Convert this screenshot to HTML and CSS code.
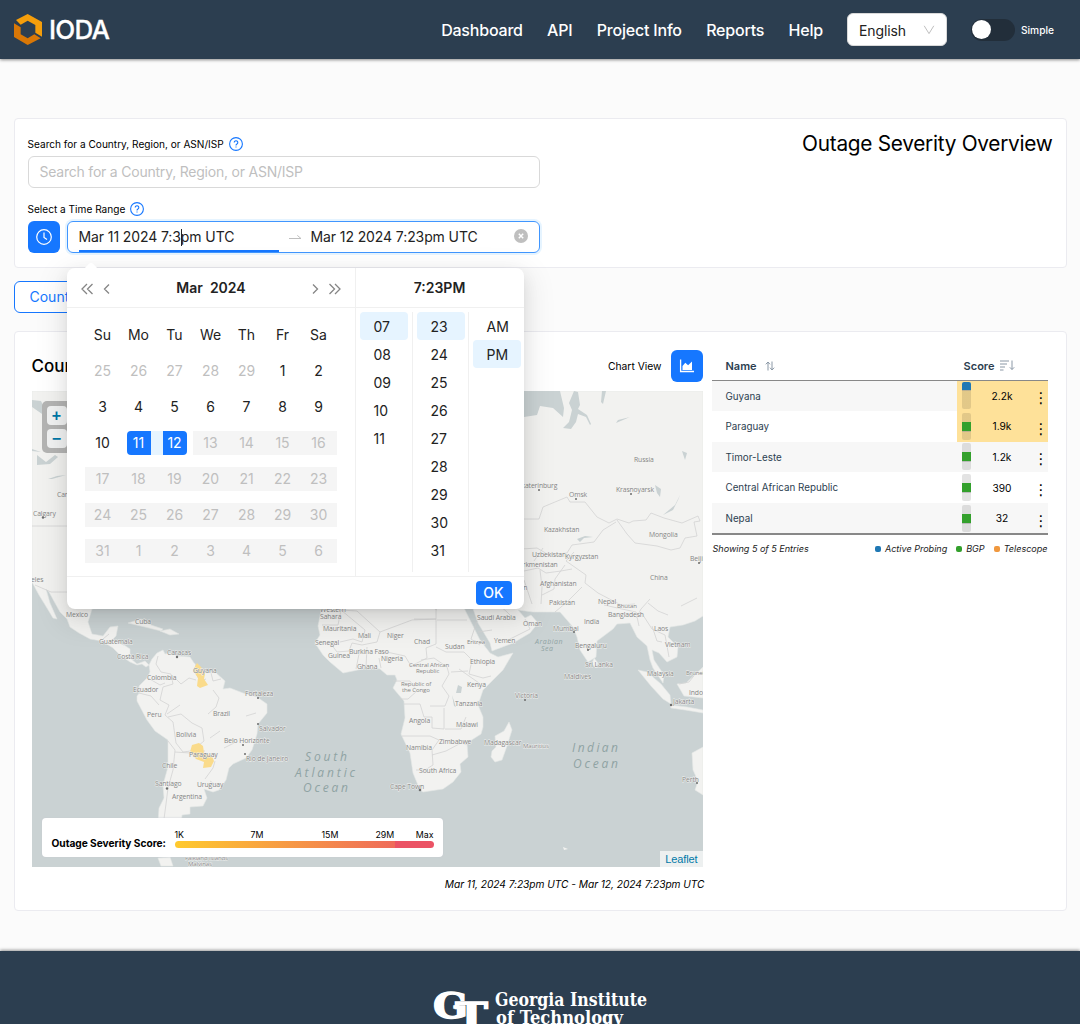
FILE: index.html
```html
<!DOCTYPE html>
<html lang="en">
<head>
<meta charset="utf-8">
<title>IODA Dashboard</title>
<link rel="stylesheet" href="styles.css">
</head>
<body>
<header class="header">
  <a class="brand">
    <svg class="brand-mark" viewBox="42 42 84 93"><path fill="#f59e0b" d="M48 60 83 42l43 24v44l-20-12V75L83 62 62 74z"/><path fill="#d97706" d="m42 70 20 12v21l21 12 20-12 19 12-39 20-41-24z"/></svg>
    <span class="brand-name">IODA</span>
  </a>
  <nav class="nav"><a>Dashboard</a><a>API</a><a>Project Info</a><a>Reports</a><a>Help</a></nav>
  <div class="language"><span>English</span><svg width="12" height="12" viewBox="0 0 12 12"><path d="M1.2 1.8 6 9.6l4.8-7.8" fill="none" stroke="#bfbfbf"/></svg></div>
  <div class="switch"><i></i></div><span class="switch-label">Simple</span>
</header>

<main class="main">
  <section class="card search-card">
    <div class="controls">
      <div class="label">Search for a Country, Region, or ASN/ISP <svg class="help" viewBox="0 0 14 14"><circle cx="7" cy="7" r="6.4"/><path d="M5.2 5.5a1.8 1.8 0 1 1 2.7 1.6c-.7.4-.9.7-.9 1.3M7 9.6v1"/></svg></div>
      <div class="search-input">Search for a Country, Region, or ASN/ISP</div>
      <div class="label label-time">Select a Time Range <svg class="help" viewBox="0 0 14 14"><circle cx="7" cy="7" r="6.4"/><path d="M5.2 5.5a1.8 1.8 0 1 1 2.7 1.6c-.7.4-.9.7-.9 1.3M7 9.6v1"/></svg></div>
      <div class="time-row">
        <div class="square-button"><svg width="16" height="16" viewBox="0 0 16 16" fill="none" stroke="#fff" stroke-width="1.2"><circle cx="8" cy="8" r="7.3"/><path d="M8 3.6V8.4l3 2.2"/></svg></div>
        <div class="range">
          <div class="range-start">Mar 11 2024 7:3<i class="caret"></i>pm UTC</div>
          <svg class="range-arrow" width="14" height="8" viewBox="0 0 14 8"><path d="M1 5.5h12L9.3 2.4" fill="none" stroke="#bfbfbf"/></svg>
          <div class="range-end">Mar 12 2024 7:23pm UTC</div>
          <svg class="clear" width="14" height="14" viewBox="0 0 14 14"><circle cx="7" cy="7" r="7" fill="#bfbfbf"/><path d="m4.8 4.8 4.4 4.4m0-4.4L4.8 9.2" stroke="#fff" stroke-width="1.5"/></svg>
          <div class="popup">
            <i class="popup-arrow"></i>
            <div class="panels">
              <div class="calendar">
                <div class="calendar-head">
                  <svg width="32" height="14" viewBox="0 0 32 14"><path d="M7 2 2 7l5 5M12.5 2l-5 5 5 5M29 2.500 24.500 7l4.500 4.500"/></svg>
                  <b>Mar&nbsp; 2024</b>
                  <svg width="32" height="14" viewBox="0 0 32 14"><path d="m3 2.500 4.500 4.500L3 11.500M19.500 2l5 5-5 5M25 2l5 5-5 5"/></svg>
                </div>
                <div class="days">
                  <span>Su</span><span>Mo</span><span>Tu</span><span>We</span><span>Th</span><span>Fr</span><span>Sa</span>
                  <span class="out">25</span><span class="out">26</span><span class="out">27</span><span class="out">28</span><span class="out">29</span><span>1</span><span>2</span>
                  <span>3</span><span>4</span><span>5</span><span>6</span><span>7</span><span>8</span><span>9</span>
                  <span>10</span><span class="range-from"><b>11</b></span><span class="range-to"><b>12</b></span><span class="off off-first">13</span><span class="off">14</span><span class="off">15</span><span class="off">16</span>
                  <span class="off">17</span><span class="off">18</span><span class="off">19</span><span class="off">20</span><span class="off">21</span><span class="off">22</span><span class="off">23</span>
                  <span class="off">24</span><span class="off">25</span><span class="off">26</span><span class="off">27</span><span class="off">28</span><span class="off">29</span><span class="off">30</span>
                  <span class="off">31</span><span class="off">1</span><span class="off">2</span><span class="off">3</span><span class="off">4</span><span class="off">5</span><span class="off">6</span>
                </div>
              </div>
              <div class="clock">
                <div class="clock-head">7:23PM</div>
                <div class="clock-columns">
                  <div><span class="picked">07</span><span>08</span><span>09</span><span>10</span><span>11</span></div>
                  <div><span class="picked">23</span><span>24</span><span>25</span><span>26</span><span>27</span><span>28</span><span>29</span><span>30</span><span>31</span></div>
                  <div><span>AM</span><span class="picked">PM</span></div>
                </div>
              </div>
            </div>
            <div class="popup-foot"><span class="ok">OK</span></div>
          </div>
        </div>
      </div>
    </div>
    <h1 class="page-title">Outage Severity Overview</h1>
  </section>

  <div class="tabs"><span class="tab">Country</span></div>

  <section class="card overview">
    <div class="map-column">
      <div class="map-head"><h2>Country</h2><span>Chart View</span>
        <div class="square-button"><svg width="16" height="16" viewBox="0 0 16 16"><path d="M1.600 1.500v12H15" fill="none" stroke="#fff" stroke-width="1.300"/><path d="M3.500 12V8l2.800-3.200 2.800 2.400L13 3.500V12z" fill="#fff"/></svg></div>
      </div>
      <div class="map">
        <svg class="world" viewBox="32 391 671 476">
          <rect x="32" y="391" width="671" height="476" fill="#cad2d3"/>
          <g class="land">
            <path d="M32 391H330L250 470 180 560 120 600 92 609 88 622 92 634 103 636 110 627 118 626 116 636 112 640 124 645 130 649 130 658 137 664 145 661 149 665 146 667 142 664 137 665 130 662 120 655 113 648 102 641 90 639 79 633 70 627 67 619 60 612 55 603 49 592 46 589 50 603 57 619 53 618 47 608 39 595 32 582z"/>
            <path d="M152 659 157 653 163 650 165 654 170 653 177 656 190 657 194 663 203 671 215 672 225 681 223 689 230 688 243 693 257 697 267 704 267 713 258 724 257 734 252 750 246 758 233 764 229 768 226 780 219 790 213 792 204 789 207 798 203 806 190 807 190 814 182 815 181 824 158 824 159 808 164 798 163 785 168 767 168 740 155 731 147 720 137 701 137 696 140 692 139 686 147 678 150 672 149 665z"/>
            <path d="M320 590 321 611 318 626 320 635 315 643 323 655 330 662 343 673 353 671 367 668 380 669 387 675 395 675 397 680 393 688 404 701 405 718 401 734 410 753 413 773 420 790 423 792 443 789 453 782 461 772 460 764 468 757 467 743 481 734 483 727 483 717 478 705 483 690 503 670 513 653 498 657 490 653 480 640 470 620 460 600 460 580z"/>
            <path d="M470 600 478 623 490 643 492 651 513 643 530 633 538 623 531 615 525 618 518 610 533 612 560 612 567 620 573 627 577 637 580 650 588 662 596 657 597 641 613 629 617 624 630 623 637 637 647 646 650 660 653 668 663 683 664 675 654 660 652 650 659 653 667 662 677 657 678 647 668 637 670 627 683 625 695 621 703 616V391H520V600z"/>
            <path d="m509 722 3 8-5 16-5 14-7 2-4-5 1-6 4-4-1-11 9-5zM594 658l4 5-2 5-4-4zM638 670l9 2 14 12 9 11 1 9-8-5-12-13zM670 705l17 2 16 3v3l-18-3-14-2zM677 684l9-1 17-16v31l-19-2zM703 747l-11 6 1 17 5 11-3 9 8 5zM128 623l13-4 10 6 12 4-2 2-16-4zM160 631l10-2 9 5-9 1zM158 858l12-1 3 9h-12z"/>
          </g>
          <g class="water">
            <path d="M524 391h36l4 17-1 9-10-9-13-2-3 9-13 2zM574 391l4 1 2 13-2 4 9 6 4 9-1 1-4-8-8-3-2 8-5 7-8-1 6-6 3-12-3-7zM602 391h4l-3 13-2-2zM616 423l14-6-12 3zM680 495l-2 5-5 10-10 5 12-10zM458 685l4 2-1 6-5 0zM452 695l4 12-2-1zM577 539l8-3 8 1-9 1-4 4z"/>
            <path d="M32 400l9 1 6 12-2 3-13-9zM37 455l9 7 9-7 3 2-8 7-13 1zM48 479l9-3 9-1-14 4zM32 449l9 3-9-1zM655 485l6 4-1 8-3-4zM682 451l5 2-2 7z"/>
          </g>
          <g class="borders">
            <path d="M32 526H68M35 585l16 7 16 0M103 639l6-5M115 641l9 4M158 656l-2 8 5 8 10 2 2 10-10 3-3 13 9 5-4 10 8 7 3 21 7 9 8-1 14 0M148 678l12 7 5-2M139 693l12 3 8 9M173 676l8 8 8-6 7 2M196 663l-1 9 5 9 6-2M211 673l2 8 8-2M168 717l13-3 11 9 10 5 2 13-6 5M168 741l7 9-2 20-5 18-2 16-2 15M175 752l15 1M205 779l8-11 2-7M210 781l9 6M213 690l6 8-3 9-8 7M246 716l10-3M210 738l10-7M224 748l10-5M167 714l13-9"/>
            <path d="M322 625h16l3-15 16 1 23 21-3 10-15 3-10-2-3 8-12 1-6-8-14-2M340 642l13-3 9 3 3-12-24-20M380 632l32-12 24-1v25l-10 4 1 10-16 8-6-10-23-5M360 649l-4 20M367 647l-1 20M379 658l2 10M414 619l22 0v-23M437 620h30M437 610l-35-20M436 647l10 5 18 0 8 8-3 14 14 4 8-2M421 660l13-2 13 9 2 7-7 12 7 10-4 10-15 0M393 681h17l7 10-9 8h-8M404 704h16l4 13h8l0 11 12 1v-21M402 736h28l9 4-7 10 1 15-8 5h-9M432 755l14-4 15-8 7 2M445 729l16 0 5-12M451 672l17-1M459 669l20 14M477 621l-6 18 9 6"/>
            <path d="M524 519h15l4-12 24-10 3 5h6l9 0 12 15 12 6 8-4 12 4 4-2 13-1 5-7 13 5 18 5 16-7 2 5-6 1 3 14-12 2-5 10-9 2-14-4-22-3-8-9-10-14M616 522l-13 8-9 12-22 3-5 8-18 2-12-7-15 1M543 548l-9 13M574 552l-8 9 20 14-1 8 13 10 23 12 14-1M524 571l14-3 8 5 15-2 11-2M540 570l2 17-1 17M565 565l-10 14-1 10-12 6M582 587l-15 15-12 10M604 605l18 4 14 3 3 14M636 618l5-9 9-10M641 612l11 17 13 6 4 22M652 626l5 15 5 1M493 600l14 12 8 8M525 619l5 10-22 11M478 632l14-2M524 580l8 24M679 684l10-2 8-10M648 603l10 8 10 4M681 606l16-8"/>
          </g>
          <g class="highlight"><path d="M193 670l4-7 4 4 4 7-1 5 4 6-8 3-3-2 1-8zM190 752l2-7 7-2 4 3 1 7 8 3 2 5-3 6-8 1 1-6-8-3z"/></g>
          <g class="places">
            <text x="33" y="515.500">Calgary</text><text x="57" y="496.500">Canada</text><text x="7" y="581.500">Los Angeles</text><text x="66" y="617">Mexico</text><text x="135" y="624">Cuba</text><text x="99" y="643.500">Guatemala</text><text x="117" y="659">Costa Rica</text><text x="167" y="655">Caracas</text><text x="147" y="679.500">Colombia</text><text x="133" y="691.500">Ecuador</text><text x="147" y="717">Peru</text><text x="213" y="715.500">Brazil</text><text x="193" y="672.500">Guyana</text><text x="176" y="737">Bolivia</text><text x="189" y="756.500">Paraguay</text><text x="162" y="767.500">Chile</text><text x="155" y="785.500">Santiago</text><text x="197" y="787">Uruguay</text><text x="172" y="799">Argentina</text><text x="224" y="743">Belo Horizonte</text><text x="246" y="760.500">Rio de Janeiro</text><text x="245" y="695.500">Fortaleza</text><text x="259" y="730.500">Salvador</text>
            <text x="320" y="611.500">Western</text><text x="320" y="618.500">Sahara</text><text x="323" y="631">Mauritania</text><text x="358" y="638">Mali</text><text x="387" y="638">Niger</text><text x="414" y="644">Chad</text><text x="445" y="648.500">Sudan</text><text x="315" y="644.500">Senegal</text><text x="328" y="658">Guinea</text><text x="349" y="653.500">Burkina Faso</text><text x="357" y="669">Ghana</text><text x="381" y="661">Nigeria</text><text x="409" y="666.500" class="tiny">Central African</text><text x="416" y="672.500" class="tiny">Republic</text><text x="401" y="686" class="tiny">Republic of</text><text x="402" y="692" class="tiny">the Congo</text><text x="470" y="663.500">Ethiopia</text><text x="467" y="687">Kenya</text><text x="455" y="706">Tanzania</text><text x="409" y="723">Angola</text><text x="456" y="726.500">Malawi</text><text x="439" y="744">Zimbabwe</text><text x="406" y="750">Namibia</text><text x="419" y="772.500">South Africa</text><text x="390" y="788.500">Cape Town</text><text x="484" y="744.500">Madagascar</text><text x="523" y="747.500" class="tiny">Mauritius</text><text x="515" y="698">Victoria</text>
            <text x="477" y="619.500">Saudi Arabia</text><text x="523" y="626">Oman</text><text x="494" y="642.500">Yemen</text><text x="467" y="643.500" class="tiny">Eritrea</text><text x="549" y="604.500">Pakistan</text><text x="598" y="604">Nepal</text><text x="617" y="607.500" class="tiny">Bhutan</text><text x="608" y="616.500">Bangladesh</text><text x="584" y="623.500">India</text><text x="553" y="631">Mumbai</text><text x="575" y="648">Bengaluru</text><text x="585" y="666.500">Sri Lanka</text><text x="564" y="679">Maldives</text><text x="654" y="630.500">Laos</text><text x="665" y="647">Vietnam</text><text x="647" y="675.500">Malaysia</text><text x="686" y="675" class="tiny">Brunei</text><text x="689" y="694.500">Indonesia</text><text x="673" y="703.500">Jakarta</text><text x="682" y="782">Perth</text>
            <text x="634" y="461.500">Russia</text><text x="514" y="487.500">Yekaterinburg</text><text x="569" y="496.500">Omsk</text><text x="616" y="491.500">Krasnoyarsk</text><text x="544" y="531.500">Kazakhstan</text><text x="649" y="537">Mongolia</text><text x="532" y="557">Uzbekistan</text><text x="565" y="558.500">Kyrgyzstan</text><text x="515" y="567">Turkmenistan</text><text x="540" y="586">Afghanistan</text><text x="650" y="580">China</text><text x="690" y="560.500">Beijing</text><text x="515" y="590">Iran</text><text x="185" y="860" class="tiny">Falkland Islands</text><text x="188" y="866" class="tiny">Malvinas</text>
          </g>
          <g class="cities"><circle cx="43" cy="517.500" r="1.200"/><circle cx="177" cy="657" r="1.200"/><circle cx="167" cy="788.500" r="1.200"/><circle cx="243" cy="745" r="1"/><circle cx="245" cy="754" r="1"/><circle cx="258" cy="698" r="1"/><circle cx="258" cy="724" r="1"/><circle cx="420" cy="790" r="1.300"/><circle cx="525" cy="700" r="1"/><circle cx="574" cy="632" r="1"/><circle cx="588" cy="650" r="1"/><circle cx="671" cy="705" r="1.200"/><circle cx="697" cy="783" r="1"/><circle cx="539" cy="490" r="1"/><circle cx="576" cy="499" r="1"/><circle cx="631" cy="494" r="1"/><circle cx="699" cy="563" r="1"/></g>
          <g class="seas"><text x="305" y="761" textLength="42">South</text><text x="295" y="776.500" textLength="60">Atlantic</text><text x="303" y="792" textLength="45">Ocean</text><text x="572" y="752" textLength="46">Indian</text><text x="573" y="767.500" textLength="45">Ocean</text><g class="small-sea"><text x="535" y="643.500">Arabian</text><text x="541" y="651">Sea</text></g></g>
          <path d="M563 847l5 2-4 1z" fill="#f3f3f1"/>
        </svg>
        <div class="zoom-control"><span>+</span><span>−</span></div>
        <div class="legend"><b>Outage Severity Score:</b><div class="scale"><div class="ticks"><span>1K</span><span>7M</span><span>15M</span><span>29M</span><span>Max</span></div><div class="gradient"></div></div></div>
        <div class="attribution">Leaflet</div>
      </div>
      <p class="map-caption">Mar 11, 2024 7:23pm UTC - Mar 12, 2024 7:23pm UTC</p>
    </div>
    <div class="table-column">
      <div class="table">
        <div class="table-head"><b>Name</b><svg class="sort" width="10" height="10" viewBox="0 0 10 10"><path d="M3 9.500V1M.8 3.300 3 1l2 2.300M7 .5V9M5 6.700 7 9l2.200-2.300"/></svg><b class="score-head">Score</b><svg class="sort" width="15" height="11" viewBox="0 0 15 11"><path d="M0 1h9M0 4h7M0 7h5M0 10h3.500M12 .5v9M9.800 7.300 12 9.500l2.200-2.200"/></svg></div>
        <div class="row"><span>Guyana</span><div class="score hot"><i class="bar probing"></i><em>2.2k</em><u>⋮</u></div></div>
        <div class="row"><span>Paraguay</span><div class="score hot"><i class="bar"></i><em>1.9k</em><u>⋮</u></div></div>
        <div class="row"><span>Timor-Leste</span><div class="score"><i class="bar"></i><em>1.2k</em><u>⋮</u></div></div>
        <div class="row"><span>Central African Republic</span><div class="score"><i class="bar"></i><em>390</em><u>⋮</u></div></div>
        <div class="row"><span>Nepal</span><div class="score"><i class="bar"></i><em>32</em><u>⋮</u></div></div>
      </div>
      <div class="table-foot"><span>Showing 5 of 5 Entries</span><span class="key probing-key">Active Probing</span><span class="key bgp-key">BGP</span><span class="key telescope-key">Telescope</span></div>
    </div>
  </section>
</main>

<footer class="footer">
  <svg width="216" height="50" viewBox="0 0 216 50" fill="#fff">
    <g class="monogram"><text x="0" y="28" font-size="35" textLength="35" lengthAdjust="spacingAndGlyphs">G</text><text x="22" y="38" font-size="35" textLength="33" lengthAdjust="spacingAndGlyphs">T</text></g>
    <g class="school"><text x="62" y="16" textLength="152" lengthAdjust="spacingAndGlyphs">Georgia Institute</text><text x="63" y="34" textLength="127" lengthAdjust="spacingAndGlyphs">of Technology</text></g>
  </svg>
</footer>
</body>
</html>
```
FILE: styles.css
```css
* { box-sizing: border-box; }
body { margin: 0; height: 1024px; overflow: hidden; display: flex; flex-direction: column; background: #fbfbfb; color: #000; font-family: Inter, "Liberation Sans", sans-serif; font-size: 14px; }
svg { display: block; flex: none; }
h1, h2, p { margin: 0; font-weight: 400; }

.header { height: 59px; flex: none; display: flex; align-items: center; padding: 0 26px 0 14px; background: #2c3e50; color: #fff; box-shadow: 0 1px 3px rgba(0,0,0,.45); }
.brand { display: flex; align-items: center; gap: 7px; margin-right: auto; }
.brand-mark { width: 28px; height: 31px; }
.brand-name { font-size: 26px; font-weight: 500; letter-spacing: -.8px; line-height: 31px; -webkit-text-stroke: .3px #fff; }
.nav { display: flex; gap: 24.300px; font-size: 16px; font-weight: 500; letter-spacing: -.2px; margin-right: 24px; }
.language { width: 100px; height: 33px; display: flex; align-items: center; justify-content: space-between; padding: 0 11px; border: 1px solid #d9d9d9; border-radius: 6px; background: #fff; color: #222; margin-right: 24px; }
.language span { padding-top: 1px; letter-spacing: -.1px; }
.switch { width: 44px; height: 22px; border-radius: 11px; padding: 1.500px; background: #222e3a; }
.switch i { display: block; width: 19px; height: 19px; border-radius: 50%; background: #fff; }
.switch-label { font-size: 10.200px; font-weight: 500; margin-left: 6px; }

.main { flex: 1; padding: 58.500px 13.500px 0; }
.card { background: #fff; border: 1.500px solid #ebebf0; border-radius: 4px; }
.search-card { height: 150px; display: flex; justify-content: space-between; padding: 18px 13px 0; }
.controls { width: 512px; }
.label { display: flex; align-items: center; gap: 5px; height: 14px; padding-top: 1px; font-size: 10.100px; }
.help { width: 14px; height: 14px; fill: none; stroke: #1677ff; stroke-width: 1.100; }
.search-input { height: 32px; margin-top: 5px; padding: 0 11px; line-height: 30px; border: 1px solid #d9d9d9; border-radius: 6px; color: #bfbfbf; letter-spacing: -.22px; }
.label-time { margin-top: 14px; }
.time-row { display: flex; gap: 7px; margin-top: 5px; }
.square-button { width: 32px; height: 32px; flex: none; display: grid; place-items: center; border-radius: 6px; background: #1677ff; }
.range { position: relative; flex: 1; height: 32px; display: flex; align-items: center; padding: 0 11px; border: 1px solid #4096ff; border-radius: 6px; box-shadow: 0 0 0 2px rgba(5,145,255,.1); color: #222; }
.range-start, .range-end { letter-spacing: -.1px; }
.range-start { width: 200px; height: 31px; line-height: 31px; border-bottom: 2px solid #1677ff; }
.caret { display: inline-block; width: 1px; height: 17px; margin: 0 -1px 0 0; vertical-align: -4px; background: #222; }
.range-arrow { margin: 0 9px 0 9px; }
.clear { margin: -2px 0 0 auto; }
.page-title { font-size: 20.800px; line-height: 24px; margin-top: -5px; letter-spacing: -.27px; }

.popup { position: absolute; z-index: 5; top: 46px; left: -1px; width: 457px; height: 341px; background: #fff; border-radius: 8px; box-shadow: 0 6px 16px rgba(0,0,0,.08), 0 3px 6px -4px rgba(0,0,0,.12), 0 9px 28px 8px rgba(0,0,0,.07); }
.popup-arrow { position: absolute; top: -4px; left: 19px; width: 10px; height: 10px; border-radius: 2px; background: #fff; transform: rotate(45deg); }
.panels { display: flex; height: 309px; border-bottom: 1px solid #f0f0f0; }
.calendar { width: 289px; border-right: 1px solid #f0f0f0; }
.calendar-head { height: 40px; display: flex; align-items: center; justify-content: space-between; padding: 0 12px 0 13px; border-bottom: 1px solid #f0f0f0; font-weight: 600; }
.calendar-head svg { fill: none; stroke: #858585; stroke-width: 1.300; margin-top: 3px; }
.calendar-head b { font-weight: 600; }
.days { display: grid; grid-template-columns: repeat(7, 36px); grid-auto-rows: 36px; padding: 9px 18px; text-align: center; line-height: 24px; }
.days span { height: 24px; margin: 6px 0; }
.days b { display: block; width: 24px; margin: 0 auto; background: #1677ff; color: #fff; font-weight: 400; }
.out, .off { color: #bfbfbf; }
.off { background: #f5f5f5; }
.range-from { background: linear-gradient(90deg, transparent 50%, #e6f4ff 50%); }
.range-to { background: linear-gradient(90deg, #e6f4ff 50%, transparent 50%); }
.range-from b { border-radius: 4px 0 0 4px; }
.range-to b { border-radius: 0 4px 4px 0; }
.clock { flex: 1; }
.clock-head { height: 40px; line-height: 40px; text-align: center; border-bottom: 1px solid #f0f0f0; font-weight: 600; }
.clock-columns { display: grid; grid-template-columns: 57px 56px 55px; padding-top: 4px; }
.clock-columns div { height: 260px; padding: 0 4px; border-right: 1px solid #f0f0f0; }
.clock-columns div:last-child { border: 0; }
.clock-columns span { display: block; width: 48px; height: 28px; padding-left: 14px; line-height: 29px; border-radius: 4px; }
.clock-columns .picked { background: #e6f4ff; }
.popup-foot { display: flex; justify-content: flex-end; padding: 4.500px 12px; }
.ok { width: 36px; height: 24px; border-radius: 4px; background: #1677ff; color: #fff; text-align: center; line-height: 24px; font-weight: 500; }

.tabs { display: flex; margin: 13.500px 0 18px; }
.tab { height: 32px; padding: 0 15px; line-height: 30px; border: 1px solid #1677ff; border-radius: 6px; background: #fff; color: #1677ff; }
.overview { height: 580px; display: flex; gap: 9px; padding: 17.500px 17px 0; }
.map-column { width: 671px; }
.map-head { height: 41px; display: flex; align-items: flex-start; gap: 9px; font-size: 10.300px; line-height: 33px; }
.map-head h2 { margin-right: auto; font-size: 17px; font-weight: 500; }
.map { position: relative; height: 476px; overflow: hidden; }
.world { width: 671px; height: 476px; }
.land { fill: #f2f2f0; stroke: #e4e7e6; stroke-width: .6; }
.water { fill: #cad2d3; }
.borders { fill: none; stroke: #d3d3d3; stroke-width: .8; }
.highlight { fill: #fadb8b; }
.places { font: 6.800px "Open Sans", sans-serif; fill: #858585; letter-spacing: -.1px; stroke: #f4f4f2; stroke-width: .8; paint-order: stroke; }
.tiny { font-size: 6px; }
.cities { fill: #6d6d6d; }
.seas { font: italic 12px "Open Sans", sans-serif; fill: #8fa3a3; }
.small-sea { font-size: 7px; letter-spacing: .5px; }
.zoom-control { position: absolute; left: 10px; top: 10px; width: 30px; height: 52px; display: flex; flex-direction: column; gap: 4px; padding: 5px; border-radius: 5px; background: #b4b4b3; }
.zoom-control span { width: 20px; height: 19px; border-radius: 4px; background: #f1f2f2; color: #0078a8; text-align: center; font: bold 16px/19px "Liberation Sans", sans-serif; }
.legend { position: absolute; left: 10px; bottom: 10px; width: 401px; height: 39px; display: flex; gap: 9px; padding: 10px 9px 0 10px; background: #fff; border-radius: 4px; box-shadow: 0 0 2px #c5cad1; font-size: 10.200px; }
.legend b { width: 114px; white-space: nowrap; line-height: 30px; letter-spacing: -.03px; }
.scale { width: 260px; }
.ticks { display: grid; grid-template-columns: 76px 71px 54px 1fr auto; font-size: 8.800px; line-height: 13px; }
.gradient { height: 7px; border-radius: 4px; background: linear-gradient(90deg, #ffca2e, #ef6b5a 85%, #eb5365 85%); }
.attribution { position: absolute; right: 0; bottom: 0; padding: 0 5px; background: #edf0f0; color: #0078a8; font: 11px/16px "Liberation Sans", sans-serif; letter-spacing: -.1px; }
.map-caption { margin: 11px -2px 0 0; text-align: right; font-size: 10.200px; letter-spacing: -.04px; line-height: 13px; font-style: italic; white-space: nowrap; }

.table-column { width: 336px; }
.table { border-bottom: 2px solid #888; color: #2c3e50; font-size: 9.800px; }
.table-head { display: flex; align-items: center; height: 31px; padding: 2px 0 0 14px; border-bottom: 1.500px solid #888; font-size: 11px; }
.table-head b { font-weight: 600; }
.sort { fill: none; stroke: #8b98a6; margin-left: 8px; }
.score-head { margin-left: 189px; }
.score-head + .sort { margin-left: 6px; }
.row { display: flex; height: 30.600px; line-height: 32px; padding-left: 14px; }
.row > span { flex: 1; }
.row:nth-child(even) { background: #f7f7f7; }
.score { width: 90.500px; display: flex; align-items: center; color: #000; }
.hot { background: #fee199; }
.bar { width: 9px; height: 27px; margin-left: 4.500px; border-radius: 2px; background: linear-gradient(rgba(0,0,0,.11) 9px, #33a02c 9px, #33a02c 18px, #999 18px, rgba(0,0,0,.11) 19px); }
.probing { background: linear-gradient(#1f78b4 8px, #999 8px, rgba(0,0,0,.11) 9px); }
.score em { width: 63px; text-align: center; font-size: 10.200px; font-style: normal; }
.score u { width: 10px; padding-top: 5px; text-align: center; text-decoration: none; font: 15px/24px "DejaVu Sans", sans-serif; }
.table-foot { display: flex; align-items: center; gap: 9px; padding: 7.500px 0 0 1px; font-size: 9.100px; letter-spacing: -.03px; line-height: 12px; font-style: italic; color: #222; white-space: nowrap; }
.table-foot > span:first-child { margin-right: auto; }
.key::before { content: ""; display: inline-block; width: 6px; height: 6px; margin-right: 4px; border-radius: 2px; }
.probing-key::before { background: #1f78b4; }
.bgp-key::before { background: #33a02c; }
.telescope-key::before { background: #f0983e; }

.footer { height: 73px; flex: none; overflow: hidden; display: flex; justify-content: center; padding: 39px 0 0 2px; background: #2c3e50; box-shadow: 0 -1px 3px rgba(0,0,0,.4); }
.monogram { font-family: "DejaVu Serif", serif; font-weight: bold; stroke: #fff; stroke-width: 1.300; }
.school { font: bold 18px "DejaVu Serif", serif; }
```
